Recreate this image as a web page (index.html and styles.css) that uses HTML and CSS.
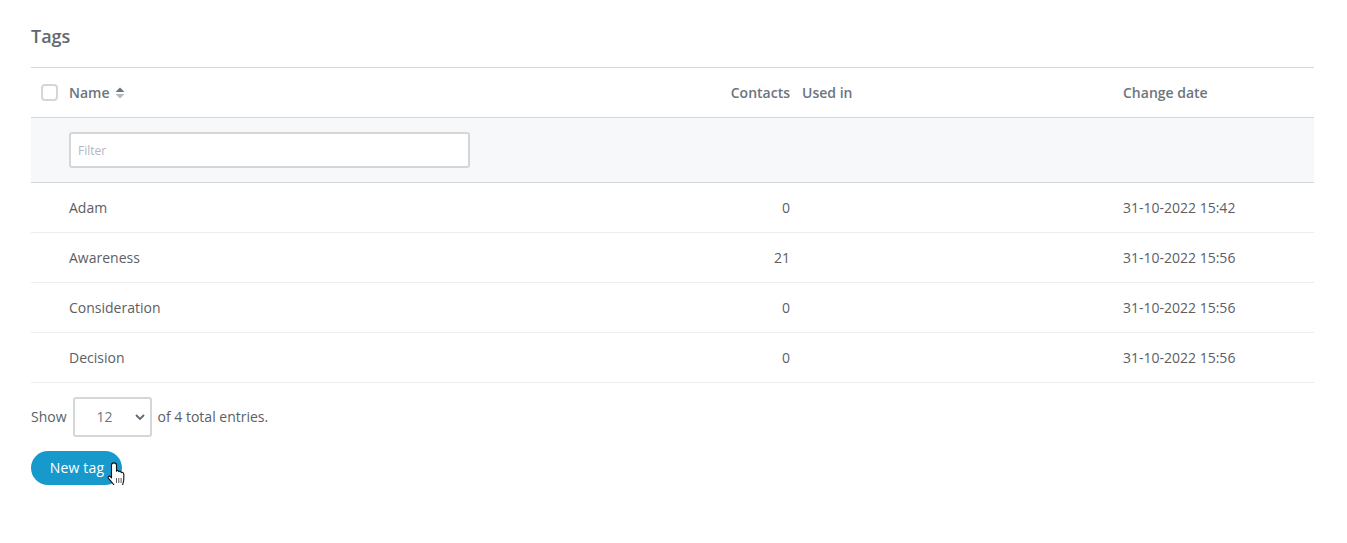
FILE: index.html
```html
<!DOCTYPE html>
<html lang="en">
<head>
<meta charset="utf-8">
<title>Tags</title>
<link rel="stylesheet" href="styles.css">
</head>
<body>
<main class="page">
  <h1 class="title">Tags</h1>
  <table class="tags">
    <colgroup>
      <col class="c-check"><col class="c-name"><col class="c-contacts"><col class="c-used"><col class="c-date">
    </colgroup>
    <thead>
      <tr class="head">
        <th><span class="checkbox"></span></th>
        <th>Name
          <svg class="sort" width="10" height="12" viewBox="0 0 10 12"><path d="M5 0.5 L9.5 5 H0.5 Z" fill="#6c757d"/><path d="M5 11.5 L9.5 7 H0.5 Z" fill="#b4bac0"/></svg>
        </th>
        <th class="num">Contacts</th>
        <th>Used in</th>
        <th>Change date</th>
      </tr>
      <tr class="filter">
        <th></th>
        <th class="filter-cell"><input class="filter-input" type="text" placeholder="Filter"></th>
        <th></th><th></th><th></th>
      </tr>
    </thead>
    <tbody>
      <tr><td></td><td>Adam</td><td class="num">0</td><td></td><td>31-10-2022 15:42</td></tr>
      <tr><td></td><td>Awareness</td><td class="num">21</td><td></td><td>31-10-2022 15:56</td></tr>
      <tr><td></td><td>Consideration</td><td class="num">0</td><td></td><td>31-10-2022 15:56</td></tr>
      <tr><td></td><td>Decision</td><td class="num">0</td><td></td><td>31-10-2022 15:56</td></tr>
    </tbody>
  </table>
  <div class="pager">
    <span class="pager-label">Show</span>
    <span class="select"><span class="select-value">12</span>
      <svg class="chevron" width="10" height="6" viewBox="0 0 10 6"><path d="M1 1 L5 5 L9 1" fill="none" stroke="#5f6770" stroke-width="1.8"/></svg>
    </span>
    <span class="pager-label">of 4 total entries.</span>
  </div>
  <div class="actions">
    <button class="btn" type="button">New tag</button>
    <svg class="cursor" width="18" height="25" viewBox="0 0 18 25"><path d="M4.5 3 C4.5 0.2 9.5 0.2 9.5 3 V9.2 C10 8 11.6 8.2 11.8 9.8 C12.4 8.8 14 9.1 14.2 10.6 C15 9.8 16.8 10.4 16.8 12.2 V17.2 C16.8 19.2 16 20.4 15.5 24 H7.5 C6.8 22 5 20.8 1.5 16.4 C0.4 14.8 2.4 13.2 3.6 14.8 L4.5 15.9 Z" fill="#fff" stroke="#111" stroke-width="1.1" stroke-linejoin="round"/><path d="M9.5 16 V21 M11.8 16 V21 M14.1 16 V21" stroke="#333" stroke-width="0.8" fill="none"/></svg>
  </div>
</main>
</body>
</html>
```
FILE: styles.css
```css
* { box-sizing: border-box; }
html, body { margin: 0; background: #fff; }
body { font-family: "Open Sans", "Liberation Sans", sans-serif; font-size: 14px; color: #5a6066; }
.page { padding: 24px 33px 0 31px; }
.title { margin: 0 0 18px; font-size: 18px; line-height: 25px; font-weight: 600; color: #62686e; }
.tags { width: 1283px; border-collapse: collapse; table-layout: fixed; border-top: 1px solid #d5d6d8; }
.c-check { width: 38px; }
.c-name { width: 400px; }
.c-contacts { width: 321px; }
.c-used { width: 333px; }
.c-date { width: 191px; }
th, td { padding: 0; text-align: left; }
.tags .num { text-align: right; }
.head th { height: 50px; font-weight: 600; color: #6c757d; border-bottom: 1px solid #d5d6d8; vertical-align: middle; }
.head th:nth-child(4), .tags td:nth-child(4) { padding-left: 12px; }
.checkbox { display: block; width: 17px; height: 17px; margin-left: 10px; border: 2px solid #d5d6d8; border-radius: 4px; background: #fff; }
.sort { margin-left: 2px; vertical-align: -1px; }
.filter { background: #f7f8fa; }
.filter th { height: 65px; border-bottom: 1px solid #d5d6d8; font-weight: 400; }
.filter-input { display: block; width: 401px; height: 36px; padding: 0 7px; border: 2px solid #d5d6d8; border-radius: 3px; background: #fff; font-family: inherit; font-size: 12px; color: #5a6066; outline: none; }
.filter-input::placeholder { color: #b4b8bd; opacity: 1; }
tbody td { height: 50px; border-bottom: 1px solid #ededee; color: #5a6066; }
.pager { display: flex; align-items: center; gap: 6px; margin-top: 14px; height: 40px; }
.pager-label { padding-bottom: 2px; }
.select { display: flex; align-items: center; justify-content: space-between; width: 79px; height: 40px; padding: 0 5px 2px 22px; border: 2px solid #d5d6d8; border-radius: 3px; background: #fff; color: #6c757d; }
.chevron { margin-top: 2px; }
.actions { position: relative; margin-top: 14px; height: 34px; }
.btn { display: block; width: 91px; height: 34px; padding: 0 0 2px 1px; border: 0; border-radius: 17px; background: #1899cc; color: #fff; font-family: inherit; font-size: 14px; font-weight: 500; letter-spacing: 0.15px; }
.cursor { position: absolute; left: 76px; top: 11px; }
```
